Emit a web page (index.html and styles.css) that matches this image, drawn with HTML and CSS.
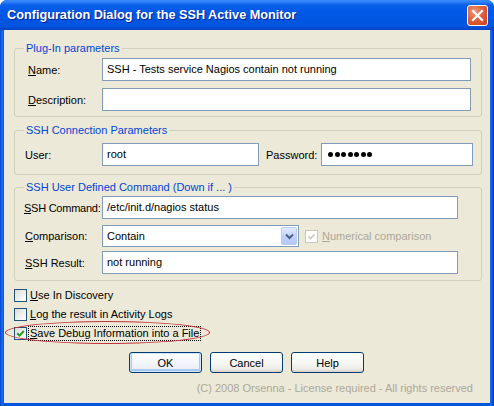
FILE: index.html
```html
<!DOCTYPE html>
<html>
<head>
<meta charset="utf-8">
<title>Configuration Dialog</title>
<link rel="stylesheet" href="styles.css">
</head>
<body>
<div class="window">
  <div class="titlebar">
    <span class="title">Configuration Dialog for the SSH Active Monitor</span>
    <span class="close">
      <svg width="21" height="21" viewBox="0 0 21 21"><path d="M6 6 L15 15 M15 6 L6 15" stroke="#fff" stroke-width="2.2" stroke-linecap="square"/></svg>
    </span>
  </div>
  <div class="client">
    <fieldset class="group g1">
      <legend>Plug-In parameters</legend>
      <div class="row">
        <label class="lbl"><u>N</u>ame:</label>
        <div class="input wide">SSH - Tests service Nagios contain not running</div>
      </div>
      <div class="row">
        <label class="lbl"><u>D</u>escription:</label>
        <div class="input wide"></div>
      </div>
    </fieldset>

    <fieldset class="group g2">
      <legend>SSH Connection Parameters</legend>
      <div class="row">
        <label class="lbl lbl2">User:</label>
        <div class="input user">root</div>
        <label class="pwlbl">Password:</label>
        <div class="input pw" aria-label="password"><i class="dot"></i><i class="dot"></i><i class="dot"></i><i class="dot"></i><i class="dot"></i><i class="dot"></i><i class="dot"></i></div>
      </div>
    </fieldset>

    <fieldset class="group g3">
      <legend>SSH User Defined Command (Down if ... )</legend>
      <div class="row">
        <label class="lbl lbl2 tight"><u>S</u>SH Command:</label>
        <div class="input cmd">/etc/init.d/nagios status</div>
      </div>
      <div class="row r-cmp">
        <label class="lbl lbl2"><u>C</u>omparison:</label>
        <div class="select">
          <span class="sel-text">Contain</span>
          <span class="sel-btn"><svg width="9" height="7" viewBox="0 0 9 7"><path d="M1 1.5 L4.5 5 L8 1.5" fill="none" stroke="#4D6185" stroke-width="2"/></svg></span>
        </div>
        <span class="cb disabled"><svg width="9" height="9" viewBox="0 0 9 9"><path d="M1.5 4.5 L3.5 6.5 L7.5 2.5" fill="none" stroke="#CAC8BB" stroke-width="1.6"/></svg></span>
        <span class="dis-text"><u>N</u>umerical comparison</span>
      </div>
      <div class="row r-res">
        <label class="lbl lbl2"><u>S</u>SH Result:</label>
        <div class="input cmd">not running</div>
      </div>
    </fieldset>

    <div class="checks">
      <div class="crow"><span class="cb"></span><span class="ctext"><u>U</u>se In Discovery</span></div>
      <div class="crow"><span class="cb"></span><span class="ctext"><u>L</u>og the result in Activity Logs</span></div>
      <div class="crow">
        <span class="cb"><svg width="9" height="9" viewBox="0 0 9 9"><path d="M1.2 4.2 L3.5 6.6 L7.8 2" fill="none" stroke="#21A121" stroke-width="2"/></svg></span>
        <span class="ctext focus"><u>S</u>ave Debug Information into a File</span>
        <span class="ellipse"></span>
      </div>
    </div>

    <div class="buttons">
      <button class="btn default">OK</button>
      <button class="btn">Cancel</button>
      <button class="btn">Help</button>
    </div>

    <div class="copy">(C) 2008 Orsenna - License required - All rights reserved</div>
  </div>
</div>
</body>
</html>
```
FILE: styles.css
```css
* { box-sizing: border-box; }
html, body { margin: 0; padding: 0; }
body {
  width: 494px;
  height: 406px;
  overflow: hidden;
  font-family: "Liberation Sans", "DejaVu Sans", sans-serif;
  font-size: 11px;
  color: #000;
  background: #fff;
}
.window {
  width: 494px;
  height: 406px;
  display: flex;
  flex-direction: column;
  background: linear-gradient(to right, #0843C8 0px, #166CF5 2px, #0855DD 4px, #0855DD 489px, #166CF5 491px, #0831B0 494px);
  border-radius: 7px 7px 0 0;
}
.titlebar {
  height: 30px;
  flex: none;
  display: flex;
  align-items: center;
  padding: 0 6px 0 7px;
  border-radius: 7px 7px 0 0;
  background: linear-gradient(to bottom, #3A8CFA 0px, #2E7FF8 2px, #0A5FE8 5px, #0058E6 12px, #0056E0 20px, #0055E0 26px, #0846CC 29px, #0843C8 30px);
}
.title {
  flex: 1;
  color: #fff;
  font-family: "Liberation Sans", sans-serif;
  font-weight: bold;
  font-size: 12.7px;
  text-shadow: 1px 1px 0 #0A1E8C;
}
.close {
  width: 21px;
  height: 21px;
  border: 1px solid #fff;
  border-radius: 3px;
  background: radial-gradient(circle at 35% 30%, #F09A7C 0%, #E0613C 45%, #C8401C 100%);
  display: flex;
  margin-top: 1px;
}
.close svg { display: block; margin: -1px; }
.client {
  flex: 1;
  margin: 0 4px 3px 4px;
  background: #ECE9D8;
  padding: 12px 8px 0 10px;
  position: relative;
}
.group {
  margin: 0;
  border: 1px solid #D0D0BF;
  border-radius: 3px;
  padding: 3px 10px 5px 12px;
  min-width: 0;
}
.group legend {
  color: #0046D5;
  padding: 0 2px;
  margin-left: -3px;
  line-height: 13px;
}
.g2 { margin-top: 7px; padding-top: 6px; padding-bottom: 8px; }
.g3 { margin-top: 6px; padding-top: 2px; padding-bottom: 6px; }
.row {
  display: flex;
  align-items: center;
  height: 23px;
  white-space: nowrap;
}
.g1 .row + .row { margin-top: 7px; }
.r-cmp { height: 22px; margin-top: 6px; }
.r-res { margin-top: 4px; }
.lbl {
  width: 75px;
  flex: none;
  padding-left: 1px;
}
.lbl2 { padding-left: 0; margin-left: -2px; width: 77px; }
.tight { letter-spacing: -0.25px; margin-left: -3px; width: 78px; }
.input {
  height: 23px;
  flex: none;
  border: 1px solid #7F9DB9;
  background: #fff;
  padding: 0 0 0 4px;
  line-height: 21px;
  white-space: nowrap;
  overflow: hidden;
}
.wide { width: 369px; }
.user { width: 157px; }
.pwlbl { margin-left: 7px; width: 55px; flex: none; }
.pw {
  width: 152px;
  padding-left: 6px;
  display: flex;
  align-items: center;
  gap: 1.5px;
}
.dot {
  width: 5px;
  height: 5px;
  border-radius: 50%;
  background: #000;
  flex: none;
}
.cmd { width: 356px; }
.select {
  width: 197px;
  height: 22px;
  flex: none;
  border: 1px solid #7F9DB9;
  background: #fff;
  display: flex;
  align-items: center;
  padding: 1px;
}
.sel-text { flex: 1; padding-left: 3px; }
.sel-btn {
  width: 16px;
  height: 18px;
  border: 1px solid #B9CBF3;
  border-radius: 2px;
  background: linear-gradient(to bottom, #E1EAFE 0%, #C3D3FD 50%, #B4C8F6 100%);
  display: flex;
  align-items: center;
  justify-content: center;
}
.cb {
  width: 13px;
  height: 13px;
  flex: none;
  border: 1px solid #1C5180;
  background: linear-gradient(135deg, #DCDCD7 0%, #F2F2EE 60%, #fff 100%);
  display: flex;
  align-items: center;
  justify-content: center;
}
.cb.disabled {
  border-color: #CAC8BB;
  background: #fff;
  margin-left: 6px;
}
.dis-text { color: #ACA899; margin-left: 4px; }
.checks {
  margin-top: 8px;
  display: flex;
  flex-direction: column;
  gap: 6px;
}
.crow {
  display: flex;
  align-items: center;
  height: 13px;
  flex: none;
  position: relative;
}
.crow .cb { margin-right: 2px; }
.ctext { padding: 0 1px; line-height: 13px; }
.focus { outline: 1px dotted #000; outline-offset: 0; }
.ellipse {
  position: absolute;
  left: -9px;
  top: -6px;
  width: 205px;
  height: 23px;
  border: 1px solid #C4343C;
  border-radius: 50%;
  pointer-events: none;
}
.buttons {
  display: flex;
  gap: 8px;
  margin-top: 12px;
  padding-left: 115px;
}
.btn {
  width: 73px;
  height: 21px;
  border: 1px solid #003C74;
  border-radius: 3px;
  background: linear-gradient(to bottom, #FFFFFF 0%, #F7F7F4 50%, #ECEBE6 85%, #D6D0C5 100%);
  font-family: "Liberation Sans", sans-serif;
  font-size: 11px;
  color: #000;
  padding: 0;
}
.btn.default {
  box-shadow: inset 0 0 0 1px #CEE7FF, inset 0 -1px 0 2px #A8C8F5;
  background: linear-gradient(to bottom, #FFFFFF 0%, #F4F6FD 50%, #E9EBF0 100%);
}
.copy {
  margin-top: 9px;
  text-align: right;
  padding-right: 9px;
  color: #ACA899;
}
```
